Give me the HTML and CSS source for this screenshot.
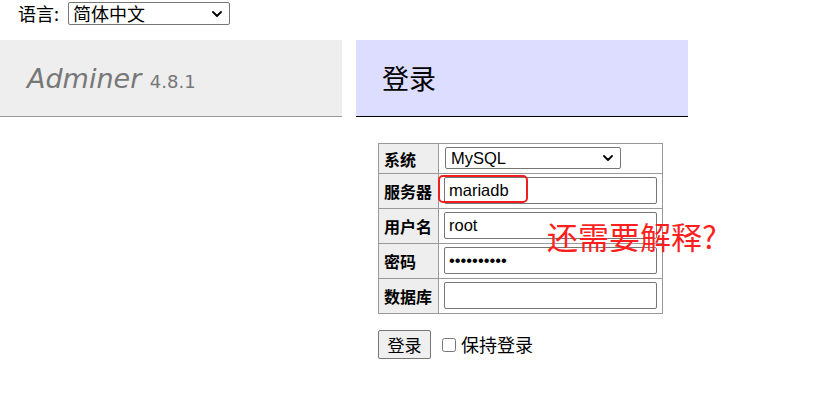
FILE: index.html
```html
<!DOCTYPE html>
<html lang="zh-CN">
<head>
<meta charset="utf-8">
<title>登录 - Adminer</title>
<link rel="stylesheet" href="styles.css">
</head>
<body>
<form class="lang">
  <span class="lang-label">语言: </span>
  <span class="select-wrap">
    <select class="lang-select">
      <option>简体中文</option>
    </select>
    <svg class="chev" width="10" height="6" viewBox="0 0 10 6"><path d="M1 1 L5 5 L9 1" fill="none" stroke="#000" stroke-width="1.8" stroke-linecap="round" stroke-linejoin="round"/></svg>
  </span>
</form>
<div class="main">
  <div class="menu">
    <h1 class="logo"><a class="logo-name" href="#">Adminer</a> <span class="version">4.8.1</span></h1>
  </div>
  <div class="content">
    <h2 class="title">登录</h2>
    <form class="login">
      <table class="login-table">
        <tr><th>系统</th><td><span class="select-wrap sys-wrap"><select class="sys-select"><option>MySQL</option></select><svg class="chev" width="10" height="6" viewBox="0 0 10 6"><path d="M1 1 L5 5 L9 1" fill="none" stroke="#000" stroke-width="1.8" stroke-linecap="round" stroke-linejoin="round"/></svg></span></td></tr>
        <tr><th>服务器</th><td><input class="field" type="text" value="mariadb"></td></tr>
        <tr><th>用户名</th><td><input class="field" type="text" value="root"></td></tr>
        <tr><th>密码</th><td><input class="field" type="password" value="xxxxxxxxxx"></td></tr>
        <tr><th>数据库</th><td><input class="field" type="text" value=""></td></tr>
      </table>
      <div class="actions">
        <button class="submit" type="button">登录</button>
        <label class="remember"><input class="check" type="checkbox"> 保持登录</label>
      </div>
      <div class="mark-box"></div>
      <div class="mark-text">还需要解释?</div>
    </form>
  </div>
</div>
</body>
</html>
```

FILE: styles.css
```css
html, body {
  margin: 0;
  padding: 0;
  background: #fff;
}
body {
  font-family: "DejaVu Sans", "Noto Sans CJK SC", sans-serif;
  font-size: 18px;
  line-height: 1.25;
  color: #000;
}
.lang {
  height: 40px;
  margin: 0;
  padding: 2px 0 0 18px;
  box-sizing: border-box;
  display: flex;
  align-items: flex-start;
}
.lang-label {
  font-family: "Noto Sans CJK SC", sans-serif;
  font-size: 18px;
  line-height: 23px;
  white-space: pre;
  margin-right: 5px;
}
.select-wrap {
  position: relative;
  display: inline-block;
}
.chev {
  position: absolute;
  right: 8px;
  top: 50%;
  margin-top: -3px;
  pointer-events: none;
}
.lang-select {
  display: block;
  width: 162px;
  height: 23px;
  -webkit-appearance: none;
  appearance: none;
  font-family: "Noto Sans CJK SC", sans-serif;
  font-size: 18px;
  line-height: 21px;
  padding: 0 0 0 4px;
  border: 1px solid #767676;
  border-radius: 2px;
  background: #fff;
  color: #000;
}
.main {
  display: flex;
  align-items: flex-start;
}
.menu {
  width: 342px;
  flex: none;
}
.logo {
  margin: 0;
  height: 76px;
  box-sizing: content-box;
  padding: 0 0 0 27px;
  line-height: 78px;
  font-size: 27px;
  font-weight: normal;
  background: #eee;
  border-bottom: 1px solid #999;
  white-space: nowrap;
}
.logo-name {
  color: #777;
  font-style: italic;
  text-decoration: none;
}
.version {
  color: #777;
  font-size: 18px;
  font-style: normal;
}
.content {
  margin-left: 14px;
  width: 332px;
  flex: none;
}
.title {
  margin: 0;
  height: 76px;
  padding: 0 0 0 26px;
  line-height: 76px;
  font-size: 27px;
  font-weight: normal;
  font-family: "Noto Sans CJK SC", sans-serif;
  background: #ddf;
  border-bottom: 1px solid #000;
}
.login {
  position: relative;
  margin: 26px 0 0 22px;
}
.login-table {
  border-collapse: collapse;
  border-top: 1px solid #999;
  border-left: 1px solid #999;
  font-size: 16px;
}
.login-table th,
.login-table td {
  border: 0;
  border-right: 1px solid #999;
  border-bottom: 1px solid #999;
  padding: 3px 5px 4px;
  vertical-align: middle;
}
.login-table th {
  background: #eee;
  text-align: left;
  font-family: "Noto Sans CJK SC", sans-serif;
  font-size: 16px;
  font-weight: bold;
  width: 49px;
  padding-top: 0;
  padding-bottom: 0;
  white-space: nowrap;
}
.sys-wrap {
  display: block;
  width: 177px;
}
.sys-select {
  display: block;
  width: 176px;
  height: 22px;
  margin-left: 1px;
  -webkit-appearance: none;
  appearance: none;
  font-family: "Liberation Sans", sans-serif;
  font-size: 16.5px;
  line-height: 20px;
  padding: 0 0 0 5px;
  border: 1px solid #767676;
  border-radius: 2px;
  background: #fff;
  color: #000;
}
.field {
  display: block;
  box-sizing: border-box;
  width: 213px;
  height: 27px;
  margin: 0;
  padding: 1px 4px;
  font-family: "Liberation Sans", sans-serif;
  font-size: 16.5px;
  border: 1px solid #767676;
  border-radius: 2px;
  color: #000;
  background: #fff;
}
.actions {
  display: flex;
  align-items: center;
  margin-top: 16px;
}
.submit {
  width: 53px;
  height: 29px;
  padding: 0;
  font-family: "Noto Sans CJK SC", sans-serif;
  font-size: 17px;
  background: #efefef;
  border: 1px solid #767676;
  border-radius: 2px;
  color: #000;
}
.remember {
  display: flex;
  align-items: center;
  margin-left: 11px;
  font-family: "Noto Sans CJK SC", sans-serif;
  font-size: 18px;
  white-space: pre;
}
.check {
  width: 14px;
  height: 14px;
  margin: 0 1px 0 0;
}
.mark-box {
  position: absolute;
  left: 60px;
  top: 32px;
  width: 86px;
  height: 24px;
  border: 2px solid #f01e1e;
  border-radius: 5px;
}
.mark-text {
  position: absolute;
  left: 169px;
  top: 75px;
  font-family: "Noto Sans CJK SC", sans-serif;
  font-size: 31px;
  line-height: 36px;
  color: #ff1f1f;
  white-space: nowrap;
}
```
